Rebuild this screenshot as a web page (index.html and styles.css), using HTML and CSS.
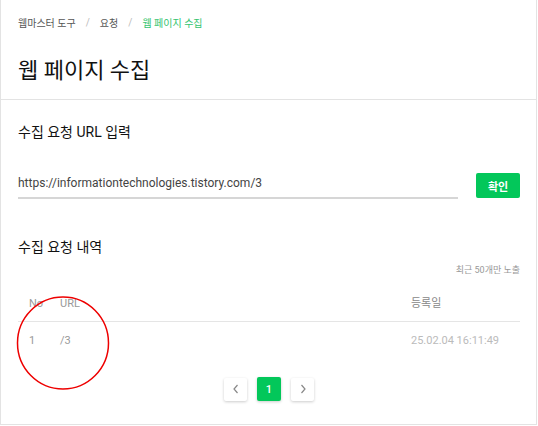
FILE: index.html
```html
<!DOCTYPE html>
<html lang="ko">
<head>
<meta charset="utf-8">
<link rel="stylesheet" href="styles.css">
</head>
<body>
<div class="page">
  <header class="head">
    <nav class="crumbs">
      <span>웹마스터 도구</span><span class="sep">/</span><span>요청</span><span class="sep">/</span><span class="cur">웹 페이지 수집</span>
    </nav>
    <h1 class="title">웹 페이지 수집</h1>
  </header>
  <main class="body">
    <h2 class="sec">수집 요청 URL 입력</h2>
    <div class="inrow">
      <div class="input">https://informationtechnologies.tistory.com/3</div>
      <button class="ok">확인</button>
    </div>
    <h2 class="sec sec2">수집 요청 내역</h2>
    <div class="note">최근 50개만 노출</div>
    <div class="table">
      <div class="tr th">
        <span class="c-no">No</span><span class="c-url">URL</span><span class="c-date">등록일</span>
      </div>
      <div class="tr td">
        <span class="c-no">1</span><span class="c-url">/3</span><span class="c-date">25.02.04 16:11:49</span>
      </div>
      <svg class="mark" width="96" height="96" viewBox="0 0 96 96"><ellipse cx="48" cy="48" rx="45.5" ry="46" fill="none" stroke="#e00" stroke-width="1.5"/></svg>
    </div>
    <div class="pager">
      <span class="pg"><svg width="8" height="10" viewBox="0 0 8 10"><path d="M5.5 1 L2 5 L5.5 9" fill="none" stroke="#888" stroke-width="1.2"/></svg></span>
      <span class="pg on">1</span>
      <span class="pg"><svg width="8" height="10" viewBox="0 0 8 10"><path d="M2.5 1 L6 5 L2.5 9" fill="none" stroke="#888" stroke-width="1.2"/></svg></span>
    </div>
  </main>
</div>
</body>
</html>
```
FILE: styles.css
```css
html, body { margin: 0; padding: 0; background: #fff; }
body { font-family: "Roboto", "Noto Sans CJK KR", sans-serif; color: #222; }
.page {
  width: 535px;
  height: 424px;
  border: 1px solid #e3e3e3;
  border-top: 0;
  position: relative;
  overflow: hidden;
}
.head { border-bottom: 1px solid #e3e3e3; padding: 14px 17px 0; height: 85px; }
.crumbs { font-size: 10px; color: #555; display: flex; align-items: center; height: 16px; }
.crumbs .sep { color: #bbb; margin: 0 10px; }
.crumbs .cur { color: #33c46f; }
.title { margin: 27px 0 0; font-size: 22px; font-weight: 400; color: #111; line-height: 28px; }
.body { padding: 0 16px 0 17px; }
.sec { margin: 21px 0 0; font-size: 14px; font-weight: 400; color: #111; line-height: 22px; }
.inrow { display: flex; align-items: flex-end; margin-top: 30px; gap: 18px; }
.input { flex: 1; font-size: 12px; color: #444; line-height: 18px; padding-bottom: 5px; border-bottom: 2px solid #d6d6d6; }
.ok { width: 44px; height: 25px; border: 0; border-radius: 2px; background: #03c75a; color: #fff; font: 700 11px "Noto Sans CJK KR", sans-serif; padding: 0; margin-bottom: 1px; }
.sec2 { margin-top: 37px; }
.note { text-align: right; font-size: 9px; color: #999; margin-top: 5px; line-height: 14px; }
.table { position: relative; margin-top: 19px; }
.tr { display: flex; font-size: 11px; color: #999; }
.th { height: 25px; align-items: flex-start; border-bottom: 1px solid #e5e5e5; line-height: 16px; }
.td { height: 36px; align-items: center; color: #999; }
.c-no { width: 31px; padding-left: 11px; }
.c-url { flex: 1; }
.c-date { width: 109px; }
.th .c-date { color: #888; }
.td .c-date { color: #bbb; }
.mark { position: absolute; left: -3px; top: -1px; }
.pager { display: flex; justify-content: center; align-items: center; gap: 10px; margin-top: 19px; }
.pg { width: 23px; height: 23px; display: flex; align-items: center; justify-content: center; background: #fff; border-radius: 2px; box-shadow: 0 1px 3px rgba(0,0,0,0.2); font-size: 11px; font-weight: 500; }
.pg.on { width: 24px; height: 24px; background: #03c75a; color: #fff; }
```
